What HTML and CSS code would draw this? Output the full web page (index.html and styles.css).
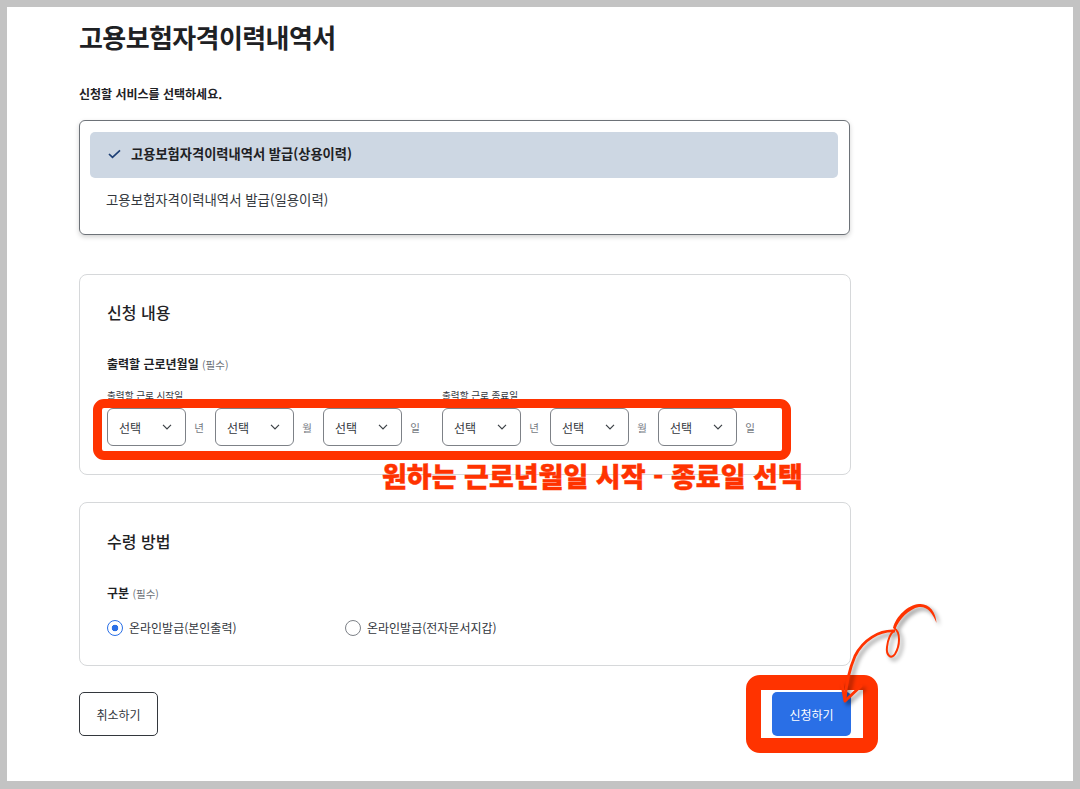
FILE: index.html
```html
<!DOCTYPE html>
<html lang="ko">
<head>
<meta charset="utf-8">
<title>고용보험자격이력내역서</title>
<link rel="stylesheet" href="styles.css">
</head>
<body>
<svg class="defs" width="0" height="0" aria-hidden="true"><defs><symbol id="chev" viewBox="0 0 10 6"><path d="M1 .8l4 4 4-4" fill="none" stroke="#3c4146" stroke-width="1.2"/></symbol></defs></svg>
<main class="frame">
  <div class="content">
    <h1 class="title">고용보험자격이력내역서</h1>
    <p class="lead">신청할 서비스를 선택하세요.</p>
    <div class="listbox">
      <div class="option selected">
        <svg class="check" viewBox="0 0 14 10" width="14" height="10"><path d="M2 5l3.5 3.4L13 1.4" fill="none" stroke="#1d3f75" stroke-width="1.7"/></svg>
        <span>고용보험자격이력내역서 발급(상용이력)</span>
      </div>
      <div class="option option-plain">고용보험자격이력내역서 발급(일용이력)</div>
    </div>

    <section class="card card-first">
      <h2 class="card-title">신청 내용</h2>
      <div class="field-label">출력할 근로년월일 <small>(필수)</small></div>
      <div class="date-cols">
        <div class="date-col">
          <div class="date-label">출력할 근로 시작일</div>
          <div class="date-row">
            <div class="select"><span>선택</span><svg class="chev"><use href="#chev"/></svg></div><span class="unit">년</span>
            <div class="select"><span>선택</span><svg class="chev"><use href="#chev"/></svg></div><span class="unit">월</span>
            <div class="select"><span>선택</span><svg class="chev"><use href="#chev"/></svg></div><span class="unit">일</span>
          </div>
        </div>
        <div class="date-col">
          <div class="date-label">출력할 근로 종료일</div>
          <div class="date-row">
            <div class="select"><span>선택</span><svg class="chev"><use href="#chev"/></svg></div><span class="unit">년</span>
            <div class="select"><span>선택</span><svg class="chev"><use href="#chev"/></svg></div><span class="unit">월</span>
            <div class="select"><span>선택</span><svg class="chev"><use href="#chev"/></svg></div><span class="unit">일</span>
          </div>
        </div>
      </div>
    </section>

    <section class="card card-second">
      <h2 class="card-title">수령 방법</h2>
      <div class="field-label field-label-second">구분 <small>(필수)</small></div>
      <div class="radios">
        <div class="radio-item"><span class="radio on"></span>온라인발급(본인출력)</div>
        <div class="radio-item"><span class="radio"></span>온라인발급(전자문서지갑)</div>
      </div>
    </section>

    <div class="actions">
      <div class="btn btn-cancel">취소하기</div>
      <div class="btn btn-submit">신청하기</div>
    </div>
  </div>
</main>

<div class="mark mark-dates"></div>
<div class="mark mark-submit"></div>
<div class="note">원하는 근로년월일 시작 - 종료일 선택</div>
<svg class="arrow" viewBox="0 0 120 130" width="120" height="130">
  <path d="M101.5 23C101 12 94 3 84 4C73 5 61 16 58 28L60.5 29C64 19 74 9 84 7C92 6 98 13 101.5 23Z" fill="#ff3300"/>
  <path d="M59 28C66 32 65 46 60 54C56 60 51 55 52 47C53 39 56 33 59 31" fill="none" stroke="#ff3300" stroke-width="2"/>
  <path d="M60 31C44 30 28 40 20 56C14 70 11 86 10 100" fill="none" stroke="#ff3300" stroke-width="2.8"/>
  <path d="M7 84L10 101L26 86" fill="none" stroke="#ff3300" stroke-width="3" stroke-linecap="round" stroke-linejoin="round"/>
</svg>
</body>
</html>
```

FILE: styles.css
```css
* { box-sizing: border-box; }
html, body { margin: 0; height: 789px; overflow: hidden; }
body {
  position: relative;
  background: #c3c3c3;
  padding: 7px 7px 8px;
  font-family: "Noto Sans CJK KR", "Noto Sans", sans-serif;
  color: #1e2124;
}
.defs { position: absolute; }
.frame { background: #fff; height: 774px; overflow: hidden; padding: 11px 0 0 72px; }
.content { width: 772px; }
.title { margin: 0; font-size: 26px; line-height: 38px; font-weight: 700; letter-spacing: -.6px; }
.lead { margin: 29px 0 0; font-size: 12px; line-height: 18px; font-weight: 700; }
.listbox {
  margin-top: 17px; width: 771px; height: 115px; padding: 11px 11px 0 10px;
  border: 1px solid #6d7278; border-radius: 6px; box-shadow: 0 2px 5px rgba(0,0,0,.18);
}
.option { height: 44px; padding: 0 0 2px 16px; display: flex; align-items: center; font-size: 13.25px; color: #33373d; }
.option-plain { font-size: 13.4px; }
.option.selected { height: 46px; padding: 0 0 3px 17px; gap: 10px; background: #cdd7e3; border-radius: 5px; font-weight: 700; color: #1e2124; }
.card { border: 1px solid #d6d8da; border-radius: 8px; padding: 26px 27px 0; }
.card-first { margin-top: 39px; height: 201px; padding-top: 25px; }
.card-second { margin-top: 27px; height: 164px; }
.card-title { margin: 0; font-size: 16px; line-height: 24px; font-weight: 500; }
.field-label { margin-top: 31px; font-size: 12px; line-height: 18px; font-weight: 700; }
.field-label-second { margin-top: 31px; }
.field-label small { font-size: 10.5px; font-weight: 400; color: #6d7278; }
.date-cols { display: flex; margin-top: 14px; }
.date-col { width: 335px; }
.date-label { font-size: 9.6px; line-height: 14px; color: #33373d; }
.date-row { display: flex; margin-top: 6px; }
.select {
  width: 79px; height: 38px; padding: 0 13px 0 11px; display: flex; align-items: center; justify-content: space-between;
  border: 1px solid #7d8187; border-radius: 6px; font-size: 12px; color: #33373d;
}
.chev { width: 10px; height: 6px; }
.unit { width: 29px; padding-right: 3px; text-align: center; align-self: center; font-size: 10.5px; color: #74797f; }
.radios { display: flex; margin-top: 15px; }
.radio-item { width: 238px; display: flex; align-items: center; gap: 6px; font-size: 12px; line-height: 20px; color: #33373d; }
.radio { width: 16px; height: 16px; border: 1px solid #7d8187; border-radius: 50%; background: #fff; }
.radio.on { border: 1.4px solid #2a6fe6; background: radial-gradient(circle, #2a6fe6 0 3px, #fff 3.6px); }
.actions { display: flex; justify-content: space-between; margin-top: 26px; width: 772px; }
.btn { width: 79px; height: 44px; display: flex; align-items: center; justify-content: center; border-radius: 5px; font-size: 12px; }
.btn-cancel { border: 1px solid #33373d; color: #33373d; }
.btn-submit { background: #2a6fe6; color: #fff; }
.mark { position: absolute; border-style: solid; border-color: #ff3300; }
.mark-dates { left: 93px; top: 399px; width: 698px; height: 61px; border-width: 9px; border-radius: 11px; }
.mark-submit { left: 746px; top: 675px; width: 132px; height: 78px; border-width: 15px; border-radius: 14px; }
.note { position: absolute; left: 382px; top: 458px; font-size: 27px; line-height: 36px; font-weight: 900; color: #ff3300; white-space: nowrap; letter-spacing: 0; -webkit-text-stroke: .4px #ff3300; }
.arrow { position: absolute; left: 835px; top: 600px; overflow: visible; filter: drop-shadow(3px 3px 2px rgba(0,0,0,.45)); }
```
